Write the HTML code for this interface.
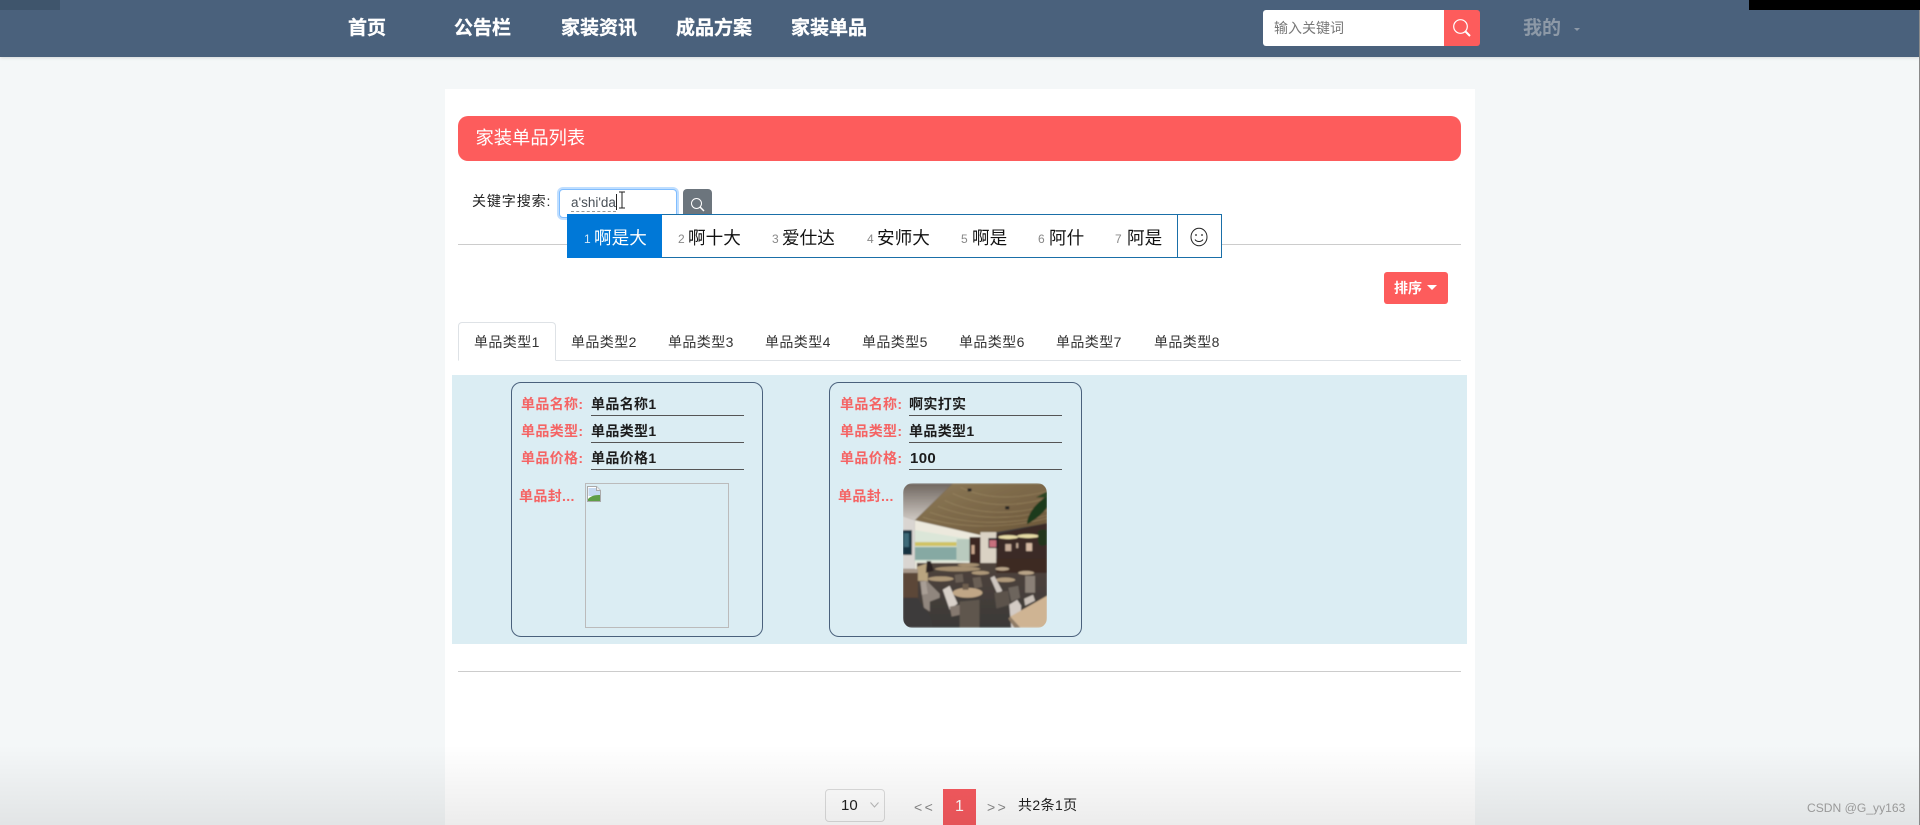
<!DOCTYPE html>
<html lang="zh-CN">
<head>
<meta charset="utf-8">
<title>家装单品列表</title>
<style>
*{box-sizing:border-box}
html,body{margin:0;padding:0}
body{width:1920px;height:825px;position:relative;overflow:hidden;background:#f4f7f8;font-family:"Liberation Sans","Noto Sans CJK SC",sans-serif;color:#212529}
.a{position:absolute}
.t{position:absolute;white-space:nowrap;height:24px;line-height:24px}
.nav{color:#fff;font-weight:700;font-size:19px;top:17px;-webkit-text-stroke:.3px #fff}
.tab{font-size:14px;top:330px;color:#333;letter-spacing:.4px}
.ime{font-size:17.6px;color:#111;top:226px}
.num{font-size:12px;color:#888;top:227px}
.lb{font-size:14px;font-weight:700;color:#f56464;letter-spacing:.35px}
.val{font-size:14px;font-weight:700;color:#1c1c1c;letter-spacing:.35px}
.ln{position:absolute;height:1px;background:#555;width:153px}
.card{position:absolute;top:382px;height:255px;border:1px solid #4a617c;border-radius:10px}
</style>
</head>
<body>
<!-- header -->
<div class="a" style="left:0;top:0;width:1920px;height:57px;background:#4a617c;box-shadow:0 1px 3px rgba(0,0,0,.12)"></div>
<div class="a" style="left:0;top:0;width:60px;height:10px;background:#3f556c"></div>
<div class="a" style="left:1749px;top:0;width:171px;height:10px;background:#000"></div>
<div class="t nav" style="left:348px">首页</div>
<div class="t nav" style="left:454px">公告栏</div>
<div class="t nav" style="left:561px">家装资讯</div>
<div class="t nav" style="left:676px">成品方案</div>
<div class="t nav" style="left:791px">家装单品</div>
<div class="a" style="left:1263px;top:10px;width:181px;height:36px;background:#fff;border-radius:3px 0 0 3px"></div>
<div class="t" style="left:1274px;top:16px;font-size:14px;color:#777">输入关键词</div>
<div class="a" style="left:1444px;top:10px;width:36px;height:36px;background:#fd5c5c;border-radius:0 3px 3px 0"></div>
<svg class="a" style="left:1452px;top:18px" width="20" height="20" viewBox="0 0 20 20" fill="none" stroke="#fff"><circle cx="8.5" cy="8.5" r="6.8" stroke-width="1.2"/><path d="M13.5 13.5L18 18" stroke-width="2"/></svg>
<div class="t" style="left:1523px;top:17px;font-size:19px;font-weight:700;color:#8d99a7">我的</div>
<div class="a" style="left:1574px;top:28px;width:0;height:0;border-left:3.5px solid transparent;border-right:3.5px solid transparent;border-top:3.5px solid #8d99a7"></div>

<!-- panel -->
<div class="a" style="left:445px;top:89px;width:1030px;height:736px;background:#fff"></div>
<div class="a" style="left:458px;top:116px;width:1003px;height:45px;background:#fd5c5c;border-radius:10px"></div>
<div class="t" style="left:475.500px;top:126px;font-size:18.300px;color:#fff">家装单品列表</div>

<!-- search -->
<div class="t" style="left:472px;top:189px;font-size:14px;letter-spacing:.9px;color:#222">关键字搜索:</div>
<div class="a" style="left:559px;top:189px;width:118px;height:29px;background:#fff;border:1px solid #80bdff;border-radius:4px;box-shadow:0 0 0 2px rgba(0,123,255,.25)"></div>
<div class="t" style="left:571px;top:191px;font-size:13.5px;color:#495057;border:0"><span style="border-bottom:1px dashed #999;line-height:17px;display:inline-block">a'shi'da</span></div>
<div class="a" style="left:616px;top:194px;width:1px;height:16px;background:#222"></div>
<svg class="a" style="left:618px;top:191px" width="9" height="18" viewBox="0 0 9 18" fill="none" stroke="#222" stroke-width="1"><path d="M1 1h6M4 1v16M1 17h6"/></svg>
<div class="a" style="left:683px;top:189px;width:29px;height:30px;background:#6c757d;border-radius:4px"></div>
<svg class="a" style="left:690px;top:197px" width="15" height="15" viewBox="0 0 15 15" fill="none" stroke="#fff"><circle cx="6.5" cy="6.5" r="5" stroke-width="1"/><path d="M10 10l4 4" stroke-width="1.5"/></svg>
<div class="a" style="left:458px;top:244px;width:1003px;height:1px;background:#ccc"></div>

<!-- IME -->
<div class="a" style="left:567px;top:214px;width:655px;height:44px;background:#fff;border:1px solid #1a6fa8"></div>
<div class="a" style="left:567px;top:214px;width:95px;height:44px;background:#0078d7"></div>
<div class="t num" style="left:584px;color:#d5e8f8">1</div><div class="t ime" style="left:594px;color:#fff">啊是大</div>
<div class="t num" style="left:678px">2</div><div class="t ime" style="left:688px">啊十大</div>
<div class="t num" style="left:772px">3</div><div class="t ime" style="left:782px">爱仕达</div>
<div class="t num" style="left:867px">4</div><div class="t ime" style="left:877px">安师大</div>
<div class="t num" style="left:961px">5</div><div class="t ime" style="left:972px">啊是</div>
<div class="t num" style="left:1038px">6</div><div class="t ime" style="left:1049px">阿什</div>
<div class="t num" style="left:1115px">7</div><div class="t ime" style="left:1127px">阿是</div>
<div class="a" style="left:1177px;top:215px;width:1px;height:42px;background:#1a6fa8"></div>
<svg class="a" style="left:1190px;top:227px" width="18" height="20" viewBox="0 0 18 20" fill="none" stroke="#222" stroke-width="1"><ellipse cx="9" cy="10" rx="8" ry="8.8"/><circle cx="6" cy="8" r=".9" fill="#222" stroke="none"/><circle cx="12" cy="8" r=".9" fill="#222" stroke="none"/><path d="M5 12.5c1.5 2.6 6.5 2.6 8 0"/></svg>

<!-- sort -->
<div class="a" style="left:1384px;top:272px;width:64px;height:32px;background:#fd5c5c;border-radius:3px"></div>
<div class="t" style="left:1394px;top:276px;font-size:14px;font-weight:700;color:#fff">排序</div>
<div class="a" style="left:1427px;top:285px;width:0;height:0;border-left:5px solid transparent;border-right:5px solid transparent;border-top:5px solid #fff"></div>

<!-- tabs -->
<div class="a" style="left:458px;top:360px;width:1003px;height:1px;background:#dee2e6"></div>
<div class="a" style="left:458px;top:322px;width:98px;height:39px;background:#fff;border:1px solid #dee2e6;border-bottom-color:#fff;border-radius:4px 4px 0 0"></div>
<div class="t tab" style="left:474px">单品类型1</div>
<div class="t tab" style="left:571px">单品类型2</div>
<div class="t tab" style="left:668px">单品类型3</div>
<div class="t tab" style="left:765px">单品类型4</div>
<div class="t tab" style="left:862px">单品类型5</div>
<div class="t tab" style="left:959px">单品类型6</div>
<div class="t tab" style="left:1056px">单品类型7</div>
<div class="t tab" style="left:1154px">单品类型8</div>

<!-- list -->
<div class="a" style="left:452px;top:375px;width:1015px;height:269px;background:#dbedf3"></div>

<div class="card" style="left:511px;width:252px"></div>
<div class="t lb" style="left:521px;top:392px">单品名称:</div><div class="t val" style="left:591px;top:392px">单品名称1</div><div class="ln" style="left:591px;top:415px"></div>
<div class="t lb" style="left:521px;top:419px">单品类型:</div><div class="t val" style="left:591px;top:419px">单品类型1</div><div class="ln" style="left:591px;top:442px"></div>
<div class="t lb" style="left:521px;top:446px">单品价格:</div><div class="t val" style="left:591px;top:446px">单品价格1</div><div class="ln" style="left:591px;top:469px"></div>
<div class="t lb" style="left:519px;top:484px">单品封...</div>
<div class="a" style="left:585px;top:483px;width:144px;height:145px;border:1px solid #bbb"></div>
<svg class="a" style="left:586px;top:486px" width="16" height="16" viewBox="0 0 16 16"><path d="M1.5 .5h9l4 4v11h-13z" fill="#fff" stroke="#aaa"/><path d="M2.500 2h7.500v3h4v5H2.500z" fill="#c5d9f0"/><path d="M2 15v-2c4-4 8-4 12-4v6z" fill="#5f9e46"/><path d="M10.500 .5v4h4" fill="#eee" stroke="#aaa"/></svg>

<div class="card" style="left:829px;width:253px"></div>
<div class="t lb" style="left:840px;top:392px">单品名称:</div><div class="t val" style="left:909px;top:392px">啊实打实</div><div class="ln" style="left:909px;top:415px"></div>
<div class="t lb" style="left:840px;top:419px">单品类型:</div><div class="t val" style="left:909px;top:419px">单品类型1</div><div class="ln" style="left:909px;top:442px"></div>
<div class="t lb" style="left:840px;top:446px">单品价格:</div><div class="t val" style="left:910px;top:447px;font-size:15px">100</div><div class="ln" style="left:909px;top:469px"></div>
<div class="t lb" style="left:838px;top:484px">单品封...</div>

<svg class="a" style="left:903px;top:483px;border-radius:10px" width="144" height="145" viewBox="0 0 145 145">
<defs>
<linearGradient id="w" x1="0" y1="0" x2="0" y2="1"><stop offset="0" stop-color="#6f665f"/><stop offset="1" stop-color="#cfc9c3"/></linearGradient>
<linearGradient id="c" x1="0" y1="0" x2="1" y2="1"><stop offset="0" stop-color="#8d7a58"/><stop offset="1" stop-color="#6b5639"/></linearGradient>
<linearGradient id="fl" x1="0" y1="0" x2="0" y2="1"><stop offset="0" stop-color="#4f433b"/><stop offset="1" stop-color="#3a3838"/></linearGradient>
<filter id="b"><feGaussianBlur stdDeviation=".8"/></filter>
</defs>
<g filter="url(#b)">
<rect width="145" height="145" fill="#3c3a3a"/>
<path d="M0 0H50L12 37 0 33z" fill="url(#w)"/>
<path d="M50 0H145V40L77 52 12 37z" fill="url(#c)"/>
<g fill="none" stroke="#a8946c" stroke-width=".7" opacity=".6">
<path d="M58 4c25 12 55 12 87 4"/><path d="M50 10c30 14 62 14 95 5"/><path d="M42 17c32 15 70 15 103 5"/><path d="M35 23c35 14 75 14 110 4"/><path d="M27 29c38 13 80 13 118 3"/><path d="M20 34c38 12 85 11 125 1"/>
</g>
<rect x="65" y="5" width="4" height="3" fill="#222"/><rect x="103" y="23" width="4" height="3" fill="#222"/>
<path d="M0 33L12 37V86H0z" fill="#d9d5d1"/>
<rect x="0" y="47" width="9" height="25" fill="#16303f"/>
<rect x="1" y="50" width="5" height="14" fill="#3c6a78"/>
<path d="M12 37L78 52V90H12z" fill="#ece9dd"/>
<path d="M12 47L67 56V79H12z" fill="#dbe6d8"/>
<rect x="12" y="59" width="42" height="4" fill="#cfc264"/>
<rect x="12" y="64" width="42" height="13" fill="#86a9a3"/>
<rect x="54" y="56" width="13" height="22" fill="#b9cabe"/>
<rect x="67" y="54" width="11" height="36" fill="#3b2620"/>
<rect x="69" y="62" width="3" height="9" fill="#c9a58c"/>
<path d="M78 49H94V96H78z" fill="#dad2c4"/>
<path d="M94 51L145 40V96H94z" fill="#3a2b25"/>
<rect x="86" y="55" width="10" height="10" fill="#1c1c22"/><rect x="87" y="57" width="7" height="7" fill="#c76f7e"/>
<ellipse cx="106" cy="54" rx="10" ry="2" fill="#e7dca6"/><ellipse cx="126" cy="53" rx="11" ry="2" fill="#e7dca6"/>
<rect x="103" y="61" width="6" height="7" fill="#c8ad99"/><rect x="124" y="60" width="6" height="8" fill="#d6b9a3"/><rect x="114" y="60" width="2" height="5" fill="#c8ad99"/>
<path d="M125 38C128 25 138 18 145 12V24C141 30 134 36 125 41z" fill="#1e3a1c"/>
<path d="M136 48c3-2 6-2 9-1v14c-5 3-9 2-9-4z" fill="#24361f"/>
<path d="M134 14L145 8V14z" fill="#2a4524"/>
<!-- mid furniture -->
<rect x="14" y="80" width="131" height="65" fill="url(#fl)"/>
<rect x="94" y="76" width="51" height="14" fill="#3e2a24"/>
<path d="M14 84L25 80V100H22V98H14z" fill="#b9a47f"/>
<rect x="0" y="87" width="15" height="28" fill="#5c4737"/>
<rect x="0" y="86" width="15" height="4" fill="#a8988a"/>
<path d="M24 78l4 0 3 10-8 2z" fill="#2a2320"/>
<ellipse cx="55" cy="86" rx="23" ry="2.500" fill="#a58f70"/>
<ellipse cx="66" cy="82" rx="11" ry="1.800" fill="#a58f70"/>
<ellipse cx="78" cy="90" rx="9" ry="2" fill="#ad9778"/>
<ellipse cx="100" cy="86" rx="7" ry="1.800" fill="#b9a488"/>
<ellipse cx="124" cy="90" rx="8" ry="2" fill="#b9a488"/>
<ellipse cx="103" cy="97" rx="10" ry="2.300" fill="#b09a7c"/>
<ellipse cx="38" cy="96" rx="13" ry="2.500" fill="#ae9878"/>
<path d="M52 92l8-1 1 8-8 1z" fill="#6a5f55"/><path d="M70 95l8-1 2 10-8 2z" fill="#6a5f55"/>
<path d="M17 98h7l13 13v4l-10 4v10l-6-4z" fill="#90867e"/>
<path d="M18 99l5-1 2 13-6 1z" fill="#a89e95"/>
<path d="M40 107l7-4 8 18-8 6z" fill="#d8d0c9"/>
<path d="M47 124l11-2v10l-9 2z" fill="#85796f"/>
<ellipse cx="65" cy="110" rx="15" ry="5" fill="#c0a686"/>
<rect x="60" y="101" width="6" height="6" fill="#6e5e50"/>
<path d="M57 119l20-2v28H57z" fill="#5f564e"/>
<path d="M88 95l4-2 8 15-5 3z" fill="#cec6bf"/>
<path d="M92 110l14-2 2 14-14 4z" fill="#5b534c"/>
<path d="M107 122l8-5 4 6-1 22h-9z" fill="#d3cbc5"/>
<path d="M122 116l9-4 2 6-10 5z" fill="#c9c0b8"/>
<path d="M123 93h10v17h-10z" fill="#8a8077"/>
<path d="M106 105l10-2 2 12-9 4z" fill="#6d655d"/>
<path d="M108 134L145 113V145H118z" fill="#cfb493"/>
<path d="M108 134l10 11h-6l-6-9z" fill="#8f7c66"/>
<path d="M0 116L15 116 28 135 30 145H0z" fill="#3e3b3b"/>
</g>
</svg>

<div class="a" style="left:458px;top:671px;width:1003px;height:1px;background:#ccc"></div>

<!-- pagination -->
<div class="a" style="left:825px;top:789px;width:60px;height:33px;background:#fff;border:1px solid #ddd;border-radius:4px"></div>
<div class="t" style="left:841px;top:794px;font-size:15px;color:#222">10</div>
<svg class="a" style="left:870px;top:802px" width="9" height="6" viewBox="0 0 9 6" fill="none" stroke="#bbb"><path d="M.5 .5L4.500 5 8.500 .5"/></svg>
<div class="t" style="left:914px;top:795px;font-size:14px;color:#888;letter-spacing:2.5px">&lt;&lt;</div>
<div class="a" style="left:943px;top:789px;width:33px;height:36px;background:#f75a5f"></div>
<div class="t" style="left:955px;top:795px;font-size:16px;color:#fff">1</div>
<div class="t" style="left:987px;top:795px;font-size:14px;color:#888;letter-spacing:2.5px">&gt;&gt;</div>
<div class="t" style="left:1018px;top:793px;font-size:14px;letter-spacing:.4px;color:#222">共2条1页</div>

<!-- bottom shade -->
<div class="a" style="left:0;top:745px;width:1920px;height:80px;background:linear-gradient(rgba(0,0,0,0),rgba(0,0,0,.075))"></div>
<div class="a" style="left:1919px;top:10px;width:1px;height:815px;background:#8a8a8a"></div>
<div class="t" style="left:1807px;top:796px;font-size:12.100px;color:#999;font-family:'Liberation Sans',sans-serif">CSDN @G_yy163</div>
</body>
</html>
